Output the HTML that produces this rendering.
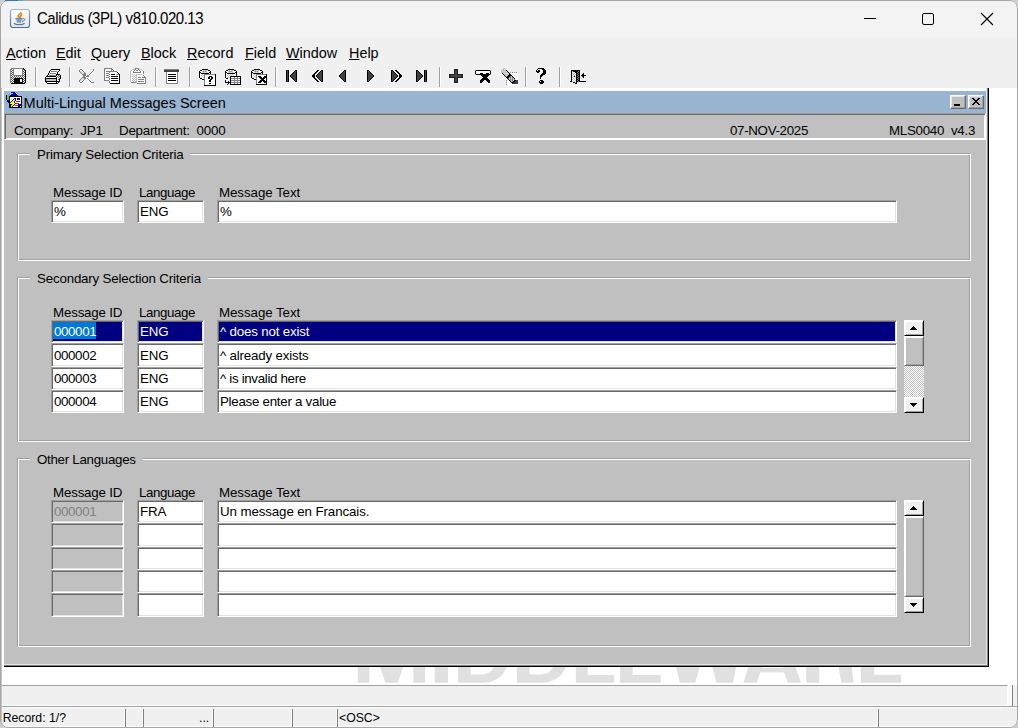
<!DOCTYPE html>
<html>
<head>
<meta charset="utf-8">
<title>Calidus (3PL) v810.020.13</title>
<style>
html,body{margin:0;padding:0;}
body{width:1018px;height:728px;overflow:hidden;position:relative;background:#f0f0f0;font-family:"Liberation Sans",sans-serif;font-size:13px;color:#000;}
div,svg{position:absolute;}
#win{left:0;top:0;width:1018px;height:728px;background:#f0f0f0;overflow:hidden;}
#titlebar{left:0;top:0;width:1018px;height:38px;background:#f3f3f3;}
#title{left:37px;top:10.400px;font-size:15px;letter-spacing:-0.46px;line-height:18px;transform:scaleY(1.05);transform-origin:0 14.200px;white-space:nowrap;color:#000;}
#menubar{left:0;top:38px;width:1018px;height:27px;background:#f0f0f0;}
.mi{top:6px;font-size:14.4px;line-height:18px;white-space:nowrap;}
.mi u{text-decoration:underline;text-underline-offset:1px;}
#toolbar{left:0;top:65px;width:1018px;height:23px;background:#f0f0f0;}
.sep{top:2px;width:1px;height:20px;background:#a0a0a0;border-right:1px solid #fff;}
.ic{overflow:visible;}
#mdi{left:2px;top:88px;width:1015px;height:597px;background:#fff;overflow:hidden;}
/* child window (coords relative to page via #cw offset) */
#child{left:2px;top:0px;width:984px;height:578px;background:#c0c0c0;border-right:1px solid #000;border-bottom:1px solid #000;}
#chl{left:982px;top:0;width:1px;height:578px;background:#e4e4e4;}
#chd{left:983px;top:0;width:1px;height:578px;background:#808080;}
#cbl{left:0;top:576px;width:983px;height:1px;background:#e4e4e4;}
#cbd{left:0;top:577px;width:984px;height:1px;background:#808080;}
#ctitle{left:0;top:0px;width:982px;height:22px;background:#99b4d1;border-top:3px solid #fff;}
#ctext{left:19.600px;top:3px;font-size:14.5px;line-height:18px;white-space:nowrap;}
.cbtn{top:3px;width:16px;height:14px;background:#c0c0c0;box-sizing:border-box;border:1px solid;border-color:#fff #404040 #404040 #fff;}
#info{left:0px;top:25px;width:982px;height:27px;box-sizing:border-box;border:1px solid;border-color:#a0a0a0 #fff #fff #a0a0a0;box-shadow:inset 1px 1px 0 #696969,inset -1px -1px 0 #fff;background:#c0c0c0;}
.lbl{font-size:13.33px;line-height:15px;white-space:nowrap;}
/* page-absolute layer inside child: origin at page (4,89) */
#form{left:-4px;top:-88px;width:0;height:0;}
.grp{box-sizing:border-box;border:1px solid #a0a0a0;}
.grp i{position:absolute;left:0;top:0;right:-2px;bottom:-2px;border:1px solid #fff;}
.gt{background:#c0c0c0;font-size:13.33px;line-height:15px;white-space:nowrap;padding:0 7px;}
.fld{box-sizing:border-box;height:23px;background:#fff;border:1px solid;border-color:#a0a0a0 #fff #fff #a0a0a0;box-shadow:inset 1px 1px 0 #696969,inset -1px -1px 0 #e3e3e3;font-size:13.33px;line-height:19px;padding:1px 0 0 2px;white-space:nowrap;overflow:hidden;}
.fld b{position:absolute;left:1px;top:1px;height:17px;background:#0078d7;font-weight:normal;}
.fld span{position:relative;}
.fld.sel{background:#000080;color:#fff;}
.fld.dis{background:#c0c0c0;color:#808080;}
#msgline{left:2px;top:685px;width:1006px;height:21px;background:#f0f0f0;border-top:1px solid #a0a0a0;border-bottom:1px solid #fff;border-right:1px solid #fff;box-sizing:border-box;}
#status{left:2px;top:706px;width:1015px;height:21px;background:#f0f0f0;border-top:1px solid #a0a0a0;border-bottom:1px solid #fff;box-shadow:inset 0 1px 0 #fff;box-sizing:border-box;font-size:12px;}
.sd{top:2px;width:1px;height:18px;margin-left:-2px;background:#808080;border-left:1px solid #fff;}
.st{top:4px;margin-left:-2px;line-height:15px;font-size:12.25px;white-space:nowrap;}
.sb{width:20px;background:#c0c0c0;}
.sbb{left:0;width:20px;height:16px;box-sizing:border-box;background:#f0f0f0;border:1px solid;border-color:#fff #000 #000 #fff;box-shadow:inset 1px 1px 0 #fff,inset -1px -1px 0 #a0a0a0;}
.sbt{left:0;width:20px;box-sizing:border-box;background:#c0c0c0;border:1px solid;border-color:#fff #696969 #696969 #fff;box-shadow:inset 1px 1px 0 #fff,inset -1px -1px 0 #a0a0a0;}
.sbk{left:0;width:20px;background:repeating-conic-gradient(#fff 0% 25%,#c0c0c0 0% 50%) 0 0/2px 2px;}
.cb{top:95px;width:16px;height:14px;box-sizing:border-box;background:#c0c0c0;border:1px solid;border-color:#fff #696969 #696969 #fff;box-shadow:inset -1px -1px 0 #a0a0a0,inset 1px 1px 0 #e3e3e3;}
#frame{left:0;top:0;width:1018px;height:728px;box-sizing:border-box;border:1px solid #a6a6a6;border-radius:8px;box-shadow:0 0 0 12px #cfcfcf;pointer-events:none;}
#lb{left:1px;top:88px;width:1px;height:639px;background:#c4c4c4;}
#vr1{left:1008px;top:685px;width:4px;height:21px;background:#fafafa;}
#vr2{left:1012px;top:685px;width:1px;height:22px;background:#808080;}
</style>
</head>
<body>
<div id="win">
  <div id="titlebar">
    <div id="title">Calidus (3PL) v810.020.13</div>
    <svg style="left:9px;top:8px" width="22" height="21" viewBox="0 0 22 21">
      <defs><linearGradient id="jb" x1="0" y1="0" x2="0" y2="1"><stop offset="0" stop-color="#9db6d0"/><stop offset="1" stop-color="#4d6c8c"/></linearGradient>
      <linearGradient id="jf" x1="0" y1="0" x2="0" y2="1"><stop offset="0" stop-color="#ffffff"/><stop offset="1" stop-color="#e6e6e6"/></linearGradient></defs>
      <rect x="1.5" y="1.5" width="19" height="18" rx="2.5" fill="url(#jf)" stroke="url(#jb)" stroke-width="1.2"/>
      <path d="M11.700 4C13.200 5.400 14 6.500 12.800 7.800C12 8.700 12.300 9.800 12.800 10.800C10.400 10.900 8.300 9.700 8.300 8C8.300 6.400 10.600 5.700 11.700 4Z" fill="#e8892b"/>
      <circle cx="11.300" cy="6.600" r=".45" fill="#fff"/><circle cx="10.400" cy="7.600" r=".4" fill="#fff"/>
      <path d="M6.300 10.700H13.600" stroke="#557aa0" stroke-width="1.200" fill="none"/>
      <path d="M7.100 11.300H12.900L11.900 14.700H8.100Z" fill="#7d9bb9"/>
      <path d="M13.400 10.900C15.800 10 16.600 11.600 15 12.700L12.900 13.600" fill="none" stroke="#557aa0" stroke-width="1"/>
      <path d="M4.900 15.200C7 17.200 13.500 17.200 15.600 15.200" fill="none" stroke="#557aa0" stroke-width="1.200"/>
    </svg>
    <svg style="left:860px;top:8px" width="140" height="22" viewBox="0 0 140 22" fill="none" stroke="#000" stroke-width="1">
      <path d="M4 10.500h12"/>
      <rect x="62.500" y="5.500" width="11" height="11" rx="1.500"/>
      <path d="M121 5l12 12M133 5l-12 12" stroke-width="1.100"/>
    </svg>
  </div>
  <div id="menubar">
    <div class="mi" style="left:6px"><u>A</u>ction</div>
    <div class="mi" style="left:56px"><u>E</u>dit</div>
    <div class="mi" style="left:91px"><u>Q</u>uery</div>
    <div class="mi" style="left:141px"><u>B</u>lock</div>
    <div class="mi" style="left:187px"><u>R</u>ecord</div>
    <div class="mi" style="left:245px"><u>F</u>ield</div>
    <div class="mi" style="left:286px"><u>W</u>indow</div>
    <div class="mi" style="left:349px"><u>H</u>elp</div>
  </div>
  <div id="toolbar">
<svg class="ic" style="left:10px;top:3px" width="16" height="16" viewBox="0 0 16 16" shape-rendering="crispEdges"><path fill="#808080" d="M1 0h12v1h-12zM0 1h1v1h-1zM3 1h1v1h-1zM12 1h1v1h-1zM0 2h1v1h-1zM3 2h1v1h-1zM12 2h1v1h-1zM0 3h1v1h-1zM3 3h1v1h-1zM12 3h1v1h-1zM0 4h1v1h-1zM3 4h1v1h-1zM12 4h1v1h-1zM0 5h1v1h-1zM3 5h1v1h-1zM12 5h1v1h-1zM0 6h1v1h-1zM3 6h1v1h-1zM12 6h1v1h-1zM0 7h1v1h-1zM3 7h10v1h-10zM0 8h1v1h-1zM0 9h1v1h-1zM0 10h1v1h-1zM0 11h1v1h-1zM0 12h1v1h-1zM0 13h1v1h-1zM0 14h1v1h-1z"/><path fill="#000" d="M13 0h1v1h-1zM14 1h1v1h-1zM15 2h1v1h-1zM15 3h1v1h-1zM15 4h1v1h-1zM15 5h1v1h-1zM15 6h1v1h-1zM15 7h1v1h-1zM15 8h1v1h-1zM15 9h1v1h-1zM4 10h9v1h-9zM15 10h1v1h-1zM4 11h6v1h-6zM12 11h1v1h-1zM15 11h1v1h-1zM4 12h6v1h-6zM12 12h1v1h-1zM15 12h1v1h-1zM4 13h6v1h-6zM12 13h1v1h-1zM15 13h1v1h-1zM4 14h9v1h-9zM15 14h1v1h-1zM1 15h14v1h-14z"/><path fill="#505050" d="M1 1h1v1h-1zM13 1h1v1h-1zM2 2h1v1h-1zM14 2h1v1h-1zM1 3h1v1h-1zM13 3h1v1h-1zM2 4h1v1h-1zM14 4h1v1h-1zM1 5h1v1h-1zM13 5h1v1h-1zM2 6h1v1h-1zM14 6h1v1h-1zM1 7h1v1h-1zM13 7h1v1h-1zM2 8h1v1h-1zM4 8h1v1h-1zM6 8h1v1h-1zM8 8h1v1h-1zM10 8h1v1h-1zM12 8h1v1h-1zM14 8h1v1h-1zM1 9h1v1h-1zM3 9h1v1h-1zM5 9h1v1h-1zM7 9h1v1h-1zM9 9h1v1h-1zM11 9h1v1h-1zM13 9h1v1h-1zM2 10h1v1h-1zM14 10h1v1h-1zM1 11h1v1h-1zM3 11h1v1h-1zM13 11h1v1h-1zM2 12h1v1h-1zM14 12h1v1h-1zM1 13h1v1h-1zM3 13h1v1h-1zM13 13h1v1h-1zM2 14h1v1h-1zM14 14h1v1h-1z"/><path fill="#fff" d="M2 1h1v1h-1zM4 1h8v1h-8zM1 2h1v1h-1zM4 2h8v1h-8zM13 2h1v1h-1zM2 3h1v1h-1zM4 3h8v1h-8zM14 3h1v1h-1zM1 4h1v1h-1zM4 4h8v1h-8zM13 4h1v1h-1zM2 5h1v1h-1zM4 5h8v1h-8zM14 5h1v1h-1zM1 6h1v1h-1zM4 6h8v1h-8zM13 6h1v1h-1zM2 7h1v1h-1zM14 7h1v1h-1zM1 8h1v1h-1zM3 8h1v1h-1zM5 8h1v1h-1zM7 8h1v1h-1zM9 8h1v1h-1zM11 8h1v1h-1zM13 8h1v1h-1zM2 9h1v1h-1zM4 9h1v1h-1zM6 9h1v1h-1zM8 9h1v1h-1zM10 9h1v1h-1zM12 9h1v1h-1zM14 9h1v1h-1zM1 10h1v1h-1zM3 10h1v1h-1zM13 10h1v1h-1zM2 11h1v1h-1zM10 11h2v1h-2zM14 11h1v1h-1zM1 12h1v1h-1zM3 12h1v1h-1zM10 12h2v1h-2zM13 12h1v1h-1zM2 13h1v1h-1zM10 13h2v1h-2zM14 13h1v1h-1zM1 14h1v1h-1zM3 14h1v1h-1zM13 14h1v1h-1z"/></svg>
<svg class="ic" style="left:45px;top:3px" width="16" height="16" viewBox="0 0 16 16" shape-rendering="crispEdges"><path fill="#000" d="M6 1h9v1h-9zM5 2h1v1h-1zM14 2h1v1h-1zM4 3h1v1h-1zM13 3h1v1h-1zM4 4h1v1h-1zM12 4h1v1h-1zM3 5h1v1h-1zM12 5h1v1h-1zM3 6h1v1h-1zM11 6h4v1h-4zM2 7h1v1h-1zM11 7h1v1h-1zM15 7h1v1h-1zM1 8h10v1h-10zM15 8h1v1h-1zM0 9h1v1h-1zM11 9h1v1h-1zM15 9h1v1h-1zM0 10h12v1h-12zM15 10h1v1h-1zM0 11h1v1h-1zM11 11h1v1h-1zM14 11h1v1h-1zM0 12h1v1h-1zM11 12h1v1h-1zM14 12h1v1h-1zM0 13h13v1h-13zM14 13h1v1h-1zM1 14h1v1h-1zM11 14h1v1h-1zM13 14h1v1h-1zM2 15h11v1h-11z"/><path fill="#fff" d="M6 2h8v1h-8zM5 3h1v1h-1zM12 3h1v1h-1zM5 4h7v1h-7zM4 5h1v1h-1zM11 5h1v1h-1zM4 6h7v1h-7zM3 7h1v1h-1zM12 7h1v1h-1zM14 7h1v1h-1zM11 8h1v1h-1zM13 8h1v1h-1zM1 9h10v1h-10zM12 9h1v1h-1zM14 9h1v1h-1zM12 10h2v1h-2zM12 11h1v1h-1zM12 12h2v1h-2zM2 14h9v1h-9zM12 14h1v1h-1z"/><path fill="#808080" d="M6 3h6v1h-6zM5 5h6v1h-6zM4 7h7v1h-7z"/><path fill="#505050" d="M13 7h1v1h-1zM12 8h1v1h-1zM14 8h1v1h-1zM13 9h1v1h-1zM14 10h1v1h-1zM13 11h1v1h-1zM13 13h1v1h-1z"/><path fill="#c0c0c0" d="M1 11h10v1h-10zM1 12h10v1h-10z"/></svg>
<svg class="ic" style="left:79px;top:3px" width="16" height="16" viewBox="0 0 16 16" shape-rendering="crispEdges"><path fill="#808080" d="M1 1h2v1h-2zM14 1h1v1h-1zM0 2h1v1h-1zM3 2h1v1h-1zM14 2h1v1h-1zM0 3h1v1h-1zM4 3h1v1h-1zM13 3h1v1h-1zM1 4h1v1h-1zM5 4h1v1h-1zM12 4h1v1h-1zM2 5h1v1h-1zM5 5h2v1h-2zM11 5h1v1h-1zM3 6h4v1h-4zM10 6h1v1h-1zM4 7h3v1h-3zM8 7h2v1h-2zM4 8h2v1h-2zM7 8h3v1h-3zM3 9h4v1h-4zM2 10h1v1h-1zM5 10h2v1h-2zM8 10h1v1h-1zM1 11h1v1h-1zM5 11h1v1h-1zM9 11h1v1h-1zM0 12h1v1h-1zM4 12h1v1h-1zM10 12h1v1h-1zM0 13h1v1h-1zM3 13h1v1h-1zM11 13h1v1h-1zM1 14h2v1h-2zM12 14h3v1h-3z"/><path fill="#e0e0e0" d="M12 1h2v1h-2zM1 2h2v1h-2zM11 2h1v1h-1zM1 3h3v1h-3zM10 3h1v1h-1zM2 4h3v1h-3zM9 4h1v1h-1zM3 5h2v1h-2zM8 5h1v1h-1zM7 6h1v1h-1zM9 9h1v1h-1zM3 10h2v1h-2zM11 10h1v1h-1zM2 11h3v1h-3zM12 11h1v1h-1zM1 12h3v1h-3zM13 12h1v1h-1zM1 13h2v1h-2zM14 13h1v1h-1z"/><path fill="#fff" d="M12 2h2v1h-2zM11 3h2v1h-2zM10 4h2v1h-2zM9 5h2v1h-2zM8 6h2v1h-2zM7 7h1v1h-1zM6 8h1v1h-1zM7 9h2v1h-2zM9 10h2v1h-2zM10 11h2v1h-2zM11 12h2v1h-2zM12 13h2v1h-2z"/></svg>
<svg class="ic" style="left:104px;top:3px" width="16" height="16" viewBox="0 0 16 16" shape-rendering="crispEdges"><path fill="#808080" d="M0 0h8v1h-8zM0 1h1v1h-1zM7 1h2v1h-2zM0 2h1v1h-1zM7 2h1v1h-1zM9 2h1v1h-1zM0 3h1v1h-1zM2 3h11v1h-11zM0 4h1v1h-1zM5 4h1v1h-1zM0 5h1v1h-1zM2 5h3v1h-3zM0 6h1v1h-1zM5 6h1v1h-1zM12 6h3v1h-3zM0 7h1v1h-1zM2 7h3v1h-3zM0 8h1v1h-1zM5 8h1v1h-1zM0 9h1v1h-1zM2 9h3v1h-3zM0 10h1v1h-1zM5 10h1v1h-1zM0 11h1v1h-1zM5 11h1v1h-1zM0 12h5v1h-5zM5 13h1v1h-1zM5 14h1v1h-1z"/><path fill="#fff" d="M1 1h6v1h-6zM1 2h6v1h-6zM8 2h1v1h-1zM1 3h1v1h-1zM1 4h4v1h-4zM6 4h7v1h-7zM1 5h1v1h-1zM5 5h9v1h-9zM1 6h4v1h-4zM6 6h1v1h-1zM11 6h1v1h-1zM1 7h1v1h-1zM5 7h10v1h-10zM1 8h4v1h-4zM6 8h1v1h-1zM14 8h1v1h-1zM1 9h1v1h-1zM5 9h10v1h-10zM1 10h4v1h-4zM6 10h1v1h-1zM14 10h1v1h-1zM1 11h4v1h-4zM6 11h9v1h-9zM5 12h2v1h-2zM14 12h1v1h-1zM6 13h9v1h-9zM6 14h9v1h-9z"/><path fill="#000" d="M13 4h1v1h-1zM14 5h1v1h-1zM7 6h4v1h-4zM15 6h1v1h-1zM15 7h1v1h-1zM7 8h7v1h-7zM15 8h1v1h-1zM15 9h1v1h-1zM7 10h7v1h-7zM15 10h1v1h-1zM15 11h1v1h-1zM7 12h7v1h-7zM15 12h1v1h-1zM15 13h1v1h-1zM15 14h1v1h-1zM6 15h10v1h-10z"/></svg>
<svg class="ic" style="left:130px;top:3px" width="16" height="16" viewBox="0 0 16 16" shape-rendering="crispEdges"><path fill="#808080" d="M5 0h4v1h-4zM5 1h1v1h-1zM8 1h1v1h-1zM4 2h1v1h-1zM6 2h2v1h-2zM9 2h1v1h-1zM3 3h1v1h-1zM10 3h1v1h-1zM13 3h1v1h-1zM3 4h8v1h-8zM13 4h1v1h-1zM13 5h1v1h-1zM13 7h1v1h-1zM14 8h1v1h-1zM8 9h3v1h-3zM12 9h4v1h-4zM15 10h1v1h-1zM8 11h6v1h-6zM15 11h1v1h-1zM15 12h1v1h-1zM8 13h6v1h-6zM15 13h1v1h-1zM1 14h5v1h-5zM15 14h1v1h-1zM7 15h9v1h-9z"/><path fill="#c0c0c0" d="M2 1h3v1h-3zM9 1h3v1h-3zM1 2h1v1h-1zM12 2h1v1h-1zM0 3h1v1h-1zM0 4h1v1h-1zM0 5h1v1h-1zM0 6h1v1h-1zM2 6h1v1h-1zM4 6h1v1h-1zM6 6h6v1h-6zM0 7h1v1h-1zM3 7h1v1h-1zM5 7h2v1h-2zM0 8h1v1h-1zM2 8h1v1h-1zM4 8h1v1h-1zM6 8h1v1h-1zM0 9h1v1h-1zM3 9h1v1h-1zM5 9h2v1h-2zM0 10h1v1h-1zM2 10h1v1h-1zM4 10h1v1h-1zM6 10h1v1h-1zM0 11h1v1h-1zM3 11h1v1h-1zM5 11h2v1h-2zM0 12h1v1h-1zM2 12h1v1h-1zM4 12h1v1h-1zM6 12h1v1h-1zM0 13h1v1h-1zM3 13h1v1h-1zM5 13h2v1h-2zM6 14h1v1h-1z"/><path fill="#fff" d="M6 1h2v1h-2zM2 2h2v1h-2zM5 2h1v1h-1zM8 2h1v1h-1zM10 2h2v1h-2zM1 3h2v1h-2zM4 3h6v1h-6zM11 3h2v1h-2zM1 4h2v1h-2zM11 4h2v1h-2zM1 5h12v1h-12zM1 6h1v1h-1zM3 6h1v1h-1zM5 6h1v1h-1zM1 7h2v1h-2zM4 7h1v1h-1zM7 7h6v1h-6zM1 8h1v1h-1zM3 8h1v1h-1zM5 8h1v1h-1zM7 8h7v1h-7zM1 9h2v1h-2zM4 9h1v1h-1zM7 9h1v1h-1zM11 9h1v1h-1zM1 10h1v1h-1zM3 10h1v1h-1zM5 10h1v1h-1zM7 10h8v1h-8zM1 11h2v1h-2zM4 11h1v1h-1zM7 11h1v1h-1zM14 11h1v1h-1zM1 12h1v1h-1zM3 12h1v1h-1zM5 12h1v1h-1zM7 12h8v1h-8zM1 13h2v1h-2zM4 13h1v1h-1zM7 13h1v1h-1zM14 13h1v1h-1zM7 14h8v1h-8z"/></svg>
<svg class="ic" style="left:164px;top:4px" width="15" height="15" viewBox="0 0 15 15" shape-rendering="crispEdges"><path fill="#808080" d="M0 0h15v1h-15zM2 3h1v1h-1zM13 3h1v1h-1zM2 4h1v1h-1zM13 4h1v1h-1zM2 5h1v1h-1zM13 5h1v1h-1zM2 6h1v1h-1zM13 6h1v1h-1zM2 7h1v1h-1zM13 7h1v1h-1zM2 8h1v1h-1zM13 8h1v1h-1zM2 9h1v1h-1zM13 9h1v1h-1zM2 10h1v1h-1zM13 10h1v1h-1zM2 11h1v1h-1zM13 11h1v1h-1zM2 12h1v1h-1zM13 12h1v1h-1zM2 13h1v1h-1zM13 13h1v1h-1zM2 14h12v1h-12z"/><path fill="#404040" d="M0 1h15v1h-15zM0 2h15v1h-15z"/><path fill="#fff" d="M3 3h10v1h-10zM3 4h10v1h-10zM3 5h1v1h-1zM12 5h1v1h-1zM3 6h10v1h-10zM3 7h1v1h-1zM12 7h1v1h-1zM3 8h10v1h-10zM3 9h1v1h-1zM12 9h1v1h-1zM3 10h10v1h-10zM3 11h1v1h-1zM12 11h1v1h-1zM3 12h10v1h-10zM3 13h10v1h-10z"/><path fill="#000" d="M4 5h8v1h-8zM4 7h8v1h-8zM4 9h8v1h-8zM4 11h8v1h-8z"/></svg>
<svg class="ic" style="left:199px;top:4px" width="17" height="17" viewBox="0 0 17 17" shape-rendering="crispEdges"><path fill="#000" d="M3 0h6v1h-6zM1 1h2v1h-2zM9 1h2v1h-2zM0 2h1v1h-1zM11 2h1v1h-1zM0 3h2v1h-2zM10 3h2v1h-2zM0 4h1v1h-1zM2 4h8v1h-8zM11 4h1v1h-1zM0 5h1v1h-1zM16 5h1v1h-1zM0 6h1v1h-1zM16 6h1v1h-1zM0 7h1v1h-1zM10 7h3v1h-3zM16 7h1v1h-1zM0 8h1v1h-1zM9 8h2v1h-2zM12 8h2v1h-2zM16 8h1v1h-1zM1 9h2v1h-2zM9 9h2v1h-2zM12 9h2v1h-2zM16 9h1v1h-1zM3 10h2v1h-2zM11 10h2v1h-2zM16 10h1v1h-1zM10 11h2v1h-2zM16 11h1v1h-1zM10 12h2v1h-2zM16 12h1v1h-1zM16 13h1v1h-1zM10 14h2v1h-2zM16 14h1v1h-1zM16 15h1v1h-1zM5 16h12v1h-12z"/><path fill="#e0e0e0" d="M3 1h1v1h-1zM5 1h2v1h-2zM8 1h1v1h-1zM3 3h1v1h-1zM5 3h2v1h-2zM8 3h1v1h-1z"/><path fill="#c0c0c0" d="M4 1h1v1h-1zM7 1h1v1h-1zM3 2h1v1h-1zM5 2h1v1h-1zM7 2h1v1h-1zM4 3h1v1h-1zM7 3h1v1h-1zM3 5h1v1h-1zM2 6h1v1h-1zM4 6h1v1h-1zM3 7h1v1h-1zM2 8h1v1h-1zM4 8h1v1h-1z"/><path fill="#fff" d="M1 2h2v1h-2zM8 2h3v1h-3zM2 3h1v1h-1zM9 3h1v1h-1zM1 4h1v1h-1zM10 4h1v1h-1zM1 5h2v1h-2zM4 5h1v1h-1zM1 6h1v1h-1zM3 6h1v1h-1zM6 6h10v1h-10zM1 7h2v1h-2zM4 7h1v1h-1zM6 7h4v1h-4zM13 7h3v1h-3zM1 8h1v1h-1zM3 8h1v1h-1zM6 8h3v1h-3zM11 8h1v1h-1zM14 8h2v1h-2zM3 9h2v1h-2zM6 9h3v1h-3zM11 9h1v1h-1zM14 9h2v1h-2zM6 10h5v1h-5zM13 10h3v1h-3zM6 11h4v1h-4zM12 11h4v1h-4zM6 12h4v1h-4zM12 12h4v1h-4zM6 13h10v1h-10zM6 14h4v1h-4zM12 14h4v1h-4zM6 15h10v1h-10z"/><path fill="#808080" d="M4 2h1v1h-1zM6 2h1v1h-1zM5 5h11v1h-11zM5 6h1v1h-1zM5 7h1v1h-1zM5 8h1v1h-1zM5 9h1v1h-1zM5 10h1v1h-1zM5 11h1v1h-1zM5 12h1v1h-1zM5 13h1v1h-1zM5 14h1v1h-1zM5 15h1v1h-1z"/></svg>
<svg class="ic" style="left:225px;top:4px" width="16" height="16" viewBox="0 0 16 16" shape-rendering="crispEdges"><path fill="#000" d="M3 0h6v1h-6zM1 1h2v1h-2zM9 1h2v1h-2zM0 2h1v1h-1zM11 2h1v1h-1zM0 3h2v1h-2zM10 3h2v1h-2zM0 4h1v1h-1zM2 4h8v1h-8zM11 4h1v1h-1zM0 5h1v1h-1zM11 5h1v1h-1zM0 6h1v1h-1zM11 6h1v1h-1zM0 7h1v1h-1zM5 7h11v1h-11zM0 8h1v1h-1zM5 8h1v1h-1zM15 8h1v1h-1zM1 9h2v1h-2zM5 9h1v1h-1zM15 9h1v1h-1zM5 10h1v1h-1zM15 10h1v1h-1zM0 11h1v1h-1zM5 11h1v1h-1zM15 11h1v1h-1zM0 12h1v1h-1zM3 12h1v1h-1zM5 12h1v1h-1zM15 12h1v1h-1zM0 13h6v1h-6zM15 13h1v1h-1zM3 14h1v1h-1zM5 14h1v1h-1zM15 14h1v1h-1zM2 15h1v1h-1zM5 15h11v1h-11z"/><path fill="#e0e0e0" d="M3 1h1v1h-1zM5 1h2v1h-2zM8 1h1v1h-1zM3 3h1v1h-1zM5 3h2v1h-2zM8 3h1v1h-1z"/><path fill="#c0c0c0" d="M4 1h1v1h-1zM7 1h1v1h-1zM3 2h1v1h-1zM5 2h1v1h-1zM7 2h1v1h-1zM4 3h1v1h-1zM7 3h1v1h-1zM3 5h1v1h-1zM5 5h1v1h-1zM7 5h1v1h-1zM2 6h1v1h-1zM4 6h1v1h-1zM6 6h1v1h-1zM8 6h1v1h-1zM3 7h1v1h-1zM2 8h1v1h-1zM4 8h1v1h-1z"/><path fill="#fff" d="M1 2h2v1h-2zM8 2h3v1h-3zM2 3h1v1h-1zM9 3h1v1h-1zM1 4h1v1h-1zM10 4h1v1h-1zM1 5h2v1h-2zM4 5h1v1h-1zM6 5h1v1h-1zM8 5h3v1h-3zM1 6h1v1h-1zM3 6h1v1h-1zM5 6h1v1h-1zM7 6h1v1h-1zM9 6h2v1h-2zM1 7h2v1h-2zM4 7h1v1h-1zM1 8h1v1h-1zM3 8h1v1h-1zM6 8h3v1h-3zM10 8h2v1h-2zM13 8h2v1h-2zM3 9h2v1h-2zM6 10h3v1h-3zM10 10h2v1h-2zM13 10h2v1h-2zM6 12h3v1h-3zM10 12h2v1h-2zM13 12h2v1h-2zM6 14h3v1h-3zM10 14h2v1h-2zM13 14h2v1h-2z"/><path fill="#808080" d="M4 2h1v1h-1zM6 2h1v1h-1zM9 8h1v1h-1zM12 8h1v1h-1zM6 9h9v1h-9zM9 10h1v1h-1zM12 10h1v1h-1zM6 11h9v1h-9zM9 12h1v1h-1zM12 12h1v1h-1zM6 13h9v1h-9zM9 14h1v1h-1zM12 14h1v1h-1z"/></svg>
<svg class="ic" style="left:251px;top:4px" width="17" height="16" viewBox="0 0 17 16" shape-rendering="crispEdges"><path fill="#000" d="M3 0h6v1h-6zM1 1h2v1h-2zM9 1h2v1h-2zM0 2h1v1h-1zM11 2h1v1h-1zM0 3h2v1h-2zM10 3h2v1h-2zM0 4h1v1h-1zM2 4h8v1h-8zM11 4h1v1h-1zM0 5h1v1h-1zM15 5h1v1h-1zM0 6h1v1h-1zM15 6h1v1h-1zM0 7h1v1h-1zM7 7h3v1h-3zM13 7h3v1h-3zM0 8h1v1h-1zM8 8h3v1h-3zM12 8h4v1h-4zM1 9h2v1h-2zM9 9h5v1h-5zM15 9h1v1h-1zM3 10h2v1h-2zM10 10h3v1h-3zM15 10h1v1h-1zM9 11h5v1h-5zM15 11h1v1h-1zM8 12h3v1h-3zM12 12h4v1h-4zM7 13h3v1h-3zM13 13h3v1h-3zM15 14h1v1h-1zM5 15h11v1h-11z"/><path fill="#e0e0e0" d="M3 1h1v1h-1zM5 1h2v1h-2zM8 1h1v1h-1zM3 3h1v1h-1zM5 3h2v1h-2zM8 3h1v1h-1z"/><path fill="#c0c0c0" d="M4 1h1v1h-1zM7 1h1v1h-1zM3 2h1v1h-1zM5 2h1v1h-1zM7 2h1v1h-1zM4 3h1v1h-1zM7 3h1v1h-1zM3 5h1v1h-1zM2 6h1v1h-1zM4 6h1v1h-1zM3 7h1v1h-1zM2 8h1v1h-1zM4 8h1v1h-1z"/><path fill="#fff" d="M1 2h2v1h-2zM8 2h3v1h-3zM2 3h1v1h-1zM9 3h1v1h-1zM1 4h1v1h-1zM10 4h1v1h-1zM1 5h2v1h-2zM4 5h1v1h-1zM1 6h1v1h-1zM3 6h1v1h-1zM6 6h9v1h-9zM1 7h2v1h-2zM4 7h1v1h-1zM6 7h1v1h-1zM10 7h3v1h-3zM1 8h1v1h-1zM3 8h1v1h-1zM6 8h2v1h-2zM11 8h1v1h-1zM3 9h2v1h-2zM6 9h3v1h-3zM14 9h1v1h-1zM6 10h4v1h-4zM13 10h2v1h-2zM6 11h3v1h-3zM14 11h1v1h-1zM6 12h2v1h-2zM11 12h1v1h-1zM6 13h1v1h-1zM10 13h3v1h-3zM6 14h9v1h-9z"/><path fill="#808080" d="M4 2h1v1h-1zM6 2h1v1h-1zM5 5h10v1h-10zM5 6h1v1h-1zM5 7h1v1h-1zM5 8h1v1h-1zM5 9h1v1h-1zM5 10h1v1h-1zM5 11h1v1h-1zM5 12h1v1h-1zM5 13h1v1h-1zM5 14h1v1h-1z"/></svg>
<svg class="ic" style="left:286px;top:5px" width="11" height="12" viewBox="0 0 11 12" shape-rendering="crispEdges"><path fill="#000" d="M0 0h1v1h-1zM2 0h1v1h-1zM9 0h2v1h-2zM0 1h1v1h-1zM2 1h1v1h-1zM8 1h1v1h-1zM10 1h1v1h-1zM0 2h1v1h-1zM2 2h1v1h-1zM7 2h1v1h-1zM10 2h1v1h-1zM0 3h1v1h-1zM2 3h1v1h-1zM6 3h1v1h-1zM10 3h1v1h-1zM0 4h1v1h-1zM2 4h1v1h-1zM5 4h1v1h-1zM10 4h1v1h-1zM0 5h1v1h-1zM2 5h1v1h-1zM4 5h1v1h-1zM10 5h1v1h-1zM0 6h1v1h-1zM2 6h1v1h-1zM4 6h1v1h-1zM10 6h1v1h-1zM0 7h1v1h-1zM2 7h1v1h-1zM5 7h1v1h-1zM10 7h1v1h-1zM0 8h1v1h-1zM2 8h1v1h-1zM6 8h1v1h-1zM10 8h1v1h-1zM0 9h1v1h-1zM2 9h1v1h-1zM7 9h1v1h-1zM10 9h1v1h-1zM0 10h1v1h-1zM2 10h1v1h-1zM8 10h1v1h-1zM10 10h1v1h-1zM0 11h1v1h-1zM2 11h1v1h-1zM9 11h2v1h-2z"/><path fill="#404040" d="M1 0h1v1h-1zM1 1h1v1h-1zM9 1h1v1h-1zM1 2h1v1h-1zM8 2h2v1h-2zM1 3h1v1h-1zM7 3h3v1h-3zM1 4h1v1h-1zM6 4h4v1h-4zM1 5h1v1h-1zM5 5h5v1h-5zM1 6h1v1h-1zM5 6h5v1h-5zM1 7h1v1h-1zM6 7h4v1h-4zM1 8h1v1h-1zM7 8h3v1h-3zM1 9h1v1h-1zM8 9h2v1h-2zM1 10h1v1h-1zM9 10h1v1h-1zM1 11h1v1h-1z"/></svg>
<svg class="ic" style="left:312px;top:5px" width="11" height="12" viewBox="0 0 11 12" shape-rendering="crispEdges"><path fill="#000" d="M5 0h2v1h-2zM9 0h2v1h-2zM4 1h2v1h-2zM8 1h1v1h-1zM10 1h1v1h-1zM3 2h2v1h-2zM7 2h1v1h-1zM10 2h1v1h-1zM2 3h2v1h-2zM6 3h1v1h-1zM10 3h1v1h-1zM1 4h2v1h-2zM5 4h1v1h-1zM10 4h1v1h-1zM0 5h3v1h-3zM4 5h1v1h-1zM10 5h1v1h-1zM0 6h3v1h-3zM4 6h1v1h-1zM10 6h1v1h-1zM1 7h2v1h-2zM5 7h1v1h-1zM10 7h1v1h-1zM2 8h2v1h-2zM6 8h1v1h-1zM10 8h1v1h-1zM3 9h2v1h-2zM7 9h1v1h-1zM10 9h1v1h-1zM4 10h2v1h-2zM8 10h1v1h-1zM10 10h1v1h-1zM5 11h2v1h-2zM9 11h2v1h-2z"/><path fill="#404040" d="M9 1h1v1h-1zM8 2h2v1h-2zM7 3h3v1h-3zM6 4h4v1h-4zM5 5h5v1h-5zM5 6h5v1h-5zM6 7h4v1h-4zM7 8h3v1h-3zM8 9h2v1h-2zM9 10h1v1h-1z"/></svg>
<svg class="ic" style="left:339px;top:5px" width="7" height="12" viewBox="0 0 7 12" shape-rendering="crispEdges"><path fill="#000" d="M5 0h2v1h-2zM4 1h1v1h-1zM6 1h1v1h-1zM3 2h1v1h-1zM6 2h1v1h-1zM2 3h1v1h-1zM6 3h1v1h-1zM1 4h1v1h-1zM6 4h1v1h-1zM0 5h1v1h-1zM6 5h1v1h-1zM0 6h1v1h-1zM6 6h1v1h-1zM1 7h1v1h-1zM6 7h1v1h-1zM2 8h1v1h-1zM6 8h1v1h-1zM3 9h1v1h-1zM6 9h1v1h-1zM4 10h1v1h-1zM6 10h1v1h-1zM5 11h2v1h-2z"/><path fill="#404040" d="M5 1h1v1h-1zM4 2h2v1h-2zM3 3h3v1h-3zM2 4h4v1h-4zM1 5h5v1h-5zM1 6h5v1h-5zM2 7h4v1h-4zM3 8h3v1h-3zM4 9h2v1h-2zM5 10h1v1h-1z"/></svg>
<svg class="ic" style="left:367px;top:5px" width="7" height="12" viewBox="0 0 7 12" shape-rendering="crispEdges"><path fill="#000" d="M0 0h2v1h-2zM0 1h1v1h-1zM2 1h1v1h-1zM0 2h1v1h-1zM3 2h1v1h-1zM0 3h1v1h-1zM4 3h1v1h-1zM0 4h1v1h-1zM5 4h1v1h-1zM0 5h1v1h-1zM6 5h1v1h-1zM0 6h1v1h-1zM6 6h1v1h-1zM0 7h1v1h-1zM5 7h1v1h-1zM0 8h1v1h-1zM4 8h1v1h-1zM0 9h1v1h-1zM3 9h1v1h-1zM0 10h1v1h-1zM2 10h1v1h-1zM0 11h2v1h-2z"/><path fill="#404040" d="M1 1h1v1h-1zM1 2h2v1h-2zM1 3h3v1h-3zM1 4h4v1h-4zM1 5h5v1h-5zM1 6h5v1h-5zM1 7h4v1h-4zM1 8h3v1h-3zM1 9h2v1h-2zM1 10h1v1h-1z"/></svg>
<svg class="ic" style="left:391px;top:5px" width="11" height="12" viewBox="0 0 11 12" shape-rendering="crispEdges"><path fill="#000" d="M0 0h2v1h-2zM4 0h2v1h-2zM0 1h1v1h-1zM2 1h1v1h-1zM5 1h2v1h-2zM0 2h1v1h-1zM3 2h1v1h-1zM6 2h2v1h-2zM0 3h1v1h-1zM4 3h1v1h-1zM7 3h2v1h-2zM0 4h1v1h-1zM5 4h1v1h-1zM8 4h2v1h-2zM0 5h1v1h-1zM6 5h1v1h-1zM8 5h3v1h-3zM0 6h1v1h-1zM6 6h1v1h-1zM8 6h3v1h-3zM0 7h1v1h-1zM5 7h1v1h-1zM8 7h2v1h-2zM0 8h1v1h-1zM4 8h1v1h-1zM7 8h2v1h-2zM0 9h1v1h-1zM3 9h1v1h-1zM6 9h2v1h-2zM0 10h1v1h-1zM2 10h1v1h-1zM5 10h2v1h-2zM0 11h2v1h-2zM4 11h2v1h-2z"/><path fill="#404040" d="M1 1h1v1h-1zM1 2h2v1h-2zM1 3h3v1h-3zM1 4h4v1h-4zM1 5h5v1h-5zM1 6h5v1h-5zM1 7h4v1h-4zM1 8h3v1h-3zM1 9h2v1h-2zM1 10h1v1h-1z"/></svg>
<svg class="ic" style="left:416px;top:5px" width="11" height="12" viewBox="0 0 11 12" shape-rendering="crispEdges"><path fill="#000" d="M0 0h2v1h-2zM8 0h1v1h-1zM10 0h1v1h-1zM0 1h1v1h-1zM2 1h1v1h-1zM8 1h1v1h-1zM10 1h1v1h-1zM0 2h1v1h-1zM3 2h1v1h-1zM8 2h1v1h-1zM10 2h1v1h-1zM0 3h1v1h-1zM4 3h1v1h-1zM8 3h1v1h-1zM10 3h1v1h-1zM0 4h1v1h-1zM5 4h1v1h-1zM8 4h1v1h-1zM10 4h1v1h-1zM0 5h1v1h-1zM6 5h1v1h-1zM8 5h1v1h-1zM10 5h1v1h-1zM0 6h1v1h-1zM6 6h1v1h-1zM8 6h1v1h-1zM10 6h1v1h-1zM0 7h1v1h-1zM5 7h1v1h-1zM8 7h1v1h-1zM10 7h1v1h-1zM0 8h1v1h-1zM4 8h1v1h-1zM8 8h1v1h-1zM10 8h1v1h-1zM0 9h1v1h-1zM3 9h1v1h-1zM8 9h1v1h-1zM10 9h1v1h-1zM0 10h1v1h-1zM2 10h1v1h-1zM8 10h1v1h-1zM10 10h1v1h-1zM0 11h2v1h-2zM8 11h1v1h-1zM10 11h1v1h-1z"/><path fill="#404040" d="M9 0h1v1h-1zM1 1h1v1h-1zM9 1h1v1h-1zM1 2h2v1h-2zM9 2h1v1h-1zM1 3h3v1h-3zM9 3h1v1h-1zM1 4h4v1h-4zM9 4h1v1h-1zM1 5h5v1h-5zM9 5h1v1h-1zM1 6h5v1h-5zM9 6h1v1h-1zM1 7h4v1h-4zM9 7h1v1h-1zM1 8h3v1h-3zM9 8h1v1h-1zM1 9h2v1h-2zM9 9h1v1h-1zM1 10h1v1h-1zM9 10h1v1h-1zM9 11h1v1h-1z"/></svg>
<svg class="ic" style="left:449px;top:4px" width="14" height="14" viewBox="0 0 14 14" shape-rendering="crispEdges"><path fill="#202020" d="M5 0h4v1h-4zM5 1h1v1h-1zM8 1h1v1h-1zM5 2h1v1h-1zM8 2h1v1h-1zM5 3h1v1h-1zM8 3h1v1h-1zM5 4h1v1h-1zM8 4h1v1h-1zM0 5h5v1h-5zM8 5h6v1h-6zM0 6h1v1h-1zM13 6h1v1h-1zM0 7h1v1h-1zM13 7h1v1h-1zM0 8h6v1h-6zM8 8h6v1h-6zM5 9h1v1h-1zM8 9h1v1h-1zM5 10h1v1h-1zM8 10h1v1h-1zM5 11h1v1h-1zM8 11h1v1h-1zM5 12h1v1h-1zM8 12h1v1h-1zM5 13h4v1h-4z"/><path fill="#404040" d="M6 1h2v1h-2zM6 2h2v1h-2zM6 3h2v1h-2zM6 4h2v1h-2zM5 5h3v1h-3zM1 6h12v1h-12zM1 7h12v1h-12zM6 8h2v1h-2zM6 9h2v1h-2zM6 10h2v1h-2zM6 11h2v1h-2zM6 12h2v1h-2z"/></svg>
<svg class="ic" style="left:475px;top:5px" width="16" height="13" viewBox="0 0 16 13" shape-rendering="crispEdges"><path fill="#808080" d="M0 0h1v1h-1zM15 0h1v1h-1zM0 4h1v1h-1zM15 4h1v1h-1z"/><path fill="#000" d="M1 0h14v1h-14zM0 1h1v1h-1zM15 1h1v1h-1zM0 2h1v1h-1zM15 2h1v1h-1zM0 3h1v1h-1zM5 3h3v1h-3zM11 3h3v1h-3zM15 3h1v1h-1zM1 4h14v1h-14zM6 5h8v1h-8zM7 6h6v1h-6zM8 7h4v1h-4zM7 8h6v1h-6zM6 9h8v1h-8zM5 10h4v1h-4zM11 10h4v1h-4zM5 11h3v1h-3zM12 11h3v1h-3zM5 12h2v1h-2zM13 12h2v1h-2z"/><path fill="#fff" d="M1 1h14v1h-14zM1 2h14v1h-14zM1 3h4v1h-4zM8 3h3v1h-3zM14 3h1v1h-1z"/></svg>
<svg class="ic" style="left:501px;top:3px" width="18" height="18" viewBox="0 0 18 18" shape-rendering="crispEdges"><path fill="#c0c0c0" d="M2 0h2v1h-2zM2 1h1v1h-1zM4 1h1v1h-1zM0 2h5v1h-5zM0 3h1v1h-1zM2 3h1v1h-1zM4 3h1v1h-1zM0 4h7v1h-7zM2 5h1v1h-1zM4 5h1v1h-1zM6 5h1v1h-1zM3 6h5v1h-5zM4 7h1v1h-1zM6 7h1v1h-1zM5 8h1v1h-1zM10 8h1v1h-1zM8 9h1v1h-1zM10 9h1v1h-1zM8 10h1v1h-1zM10 10h1v1h-1zM12 10h1v1h-1zM8 11h1v1h-1zM10 11h1v1h-1zM12 11h1v1h-1zM10 12h1v1h-1zM12 12h1v1h-1zM10 13h1v1h-1z"/><path fill="#e0e0e0" d="M1 1h1v1h-1zM3 1h1v1h-1zM1 3h1v1h-1zM3 3h1v1h-1zM5 3h1v1h-1zM3 5h1v1h-1zM5 5h1v1h-1zM7 5h1v1h-1zM5 7h1v1h-1z"/><path fill="#000" d="M5 2h1v1h-1zM6 3h1v1h-1zM7 4h1v1h-1zM1 5h1v1h-1zM8 5h1v1h-1zM2 6h1v1h-1zM8 6h2v1h-2zM3 7h1v1h-1zM7 7h4v1h-4zM4 8h1v1h-1zM6 8h3v1h-3zM11 8h1v1h-1zM5 9h3v1h-3zM12 9h1v1h-1zM6 10h1v1h-1zM13 10h1v1h-1zM7 11h1v1h-1zM8 12h1v1h-1zM13 12h2v1h-2zM9 13h1v1h-1zM12 13h2v1h-2zM10 14h3v1h-3z"/><path fill="#808080" d="M9 4h1v1h-1zM11 4h1v1h-1zM13 4h1v1h-1zM15 4h1v1h-1zM9 8h1v1h-1zM9 9h1v1h-1zM11 9h1v1h-1zM7 10h1v1h-1zM9 10h1v1h-1zM11 10h1v1h-1zM9 11h1v1h-1zM11 11h1v1h-1zM13 11h1v1h-1zM5 12h1v1h-1zM9 12h1v1h-1zM11 12h1v1h-1zM11 13h1v1h-1zM5 14h1v1h-1zM5 16h1v1h-1z"/><path fill="#fff" d="M9 5h8v1h-8zM10 6h7v1h-7zM11 7h6v1h-6zM12 8h5v1h-5zM13 9h4v1h-4zM14 10h3v1h-3zM6 11h1v1h-1zM14 11h3v1h-3zM6 12h2v1h-2zM6 13h3v1h-3zM6 14h4v1h-4zM6 15h5v1h-5zM6 16h11v1h-11zM6 17h11v1h-11z"/><path fill="#404040" d="M15 12h2v1h-2zM14 13h3v1h-3zM13 14h4v1h-4zM11 15h6v1h-6z"/></svg>
<svg class="ic" style="left:536px;top:3px" width="10" height="16" viewBox="0 0 10 16" shape-rendering="crispEdges"><path fill="#000" d="M2 0h6v1h-6zM1 1h1v1h-1zM6 1h3v1h-3zM0 2h1v1h-1zM2 2h2v1h-2zM7 2h3v1h-3zM0 3h4v1h-4zM7 3h3v1h-3zM1 4h2v1h-2zM7 4h3v1h-3zM6 5h4v1h-4zM5 6h4v1h-4zM4 7h3v1h-3zM4 8h2v1h-2zM4 9h1v1h-1zM4 10h1v1h-1zM4 12h3v1h-3zM3 13h1v1h-1zM5 13h3v1h-3zM3 14h5v1h-5zM4 15h3v1h-3z"/><path fill="#fff" d="M1 2h1v1h-1zM4 13h1v1h-1z"/></svg>
<svg class="ic" style="left:570px;top:5px" width="16" height="14" viewBox="0 0 16 14" shape-rendering="crispEdges"><path fill="#000" d="M1 0h9v1h-9zM1 1h1v1h-1zM3 1h5v1h-5zM9 1h1v1h-1zM1 2h1v1h-1zM5 2h2v1h-2zM8 2h2v1h-2zM1 3h1v1h-1zM6 3h2v1h-2zM9 3h1v1h-1zM13 3h1v1h-1zM1 4h1v1h-1zM6 4h1v1h-1zM8 4h2v1h-2zM12 4h2v1h-2zM1 5h1v1h-1zM6 5h2v1h-2zM9 5h1v1h-1zM11 5h5v1h-5zM1 6h1v1h-1zM4 6h1v1h-1zM6 6h1v1h-1zM8 6h2v1h-2zM12 6h2v1h-2zM1 7h1v1h-1zM6 7h2v1h-2zM9 7h1v1h-1zM13 7h1v1h-1zM1 8h1v1h-1zM6 8h1v1h-1zM8 8h2v1h-2zM1 9h1v1h-1zM6 9h2v1h-2zM9 9h1v1h-1zM1 10h1v1h-1zM6 10h1v1h-1zM8 10h2v1h-2zM0 11h2v1h-2zM6 11h2v1h-2zM9 11h7v1h-7zM3 12h2v1h-2zM6 12h1v1h-1zM5 13h2v1h-2z"/><path fill="#c0c0c0" d="M2 1h1v1h-1zM3 2h1v1h-1zM2 3h1v1h-1zM4 3h1v1h-1zM3 4h1v1h-1zM5 4h1v1h-1zM2 5h1v1h-1zM4 5h1v1h-1zM3 6h1v1h-1zM5 6h1v1h-1zM2 7h1v1h-1zM4 7h1v1h-1zM3 8h1v1h-1zM5 8h1v1h-1zM2 9h1v1h-1zM4 9h1v1h-1zM3 10h1v1h-1zM5 10h1v1h-1zM2 11h1v1h-1zM4 11h1v1h-1zM5 12h1v1h-1z"/><path fill="#808080" d="M8 1h1v1h-1zM7 2h1v1h-1zM8 3h1v1h-1zM7 4h1v1h-1zM8 5h1v1h-1zM7 6h1v1h-1zM8 7h1v1h-1zM7 8h1v1h-1zM8 9h1v1h-1zM7 10h1v1h-1zM8 11h1v1h-1z"/><path fill="#fff" d="M2 2h1v1h-1zM4 2h1v1h-1zM3 3h1v1h-1zM5 3h1v1h-1zM2 4h1v1h-1zM4 4h1v1h-1zM3 5h1v1h-1zM5 5h1v1h-1zM2 6h1v1h-1zM3 7h1v1h-1zM5 7h1v1h-1zM2 8h1v1h-1zM4 8h1v1h-1zM3 9h1v1h-1zM5 9h1v1h-1zM2 10h1v1h-1zM4 10h1v1h-1zM3 11h1v1h-1zM5 11h1v1h-1z"/></svg>
<div class="sep" style="left:35px"></div>
<div class="sep" style="left:69px"></div>
<div class="sep" style="left:155px"></div>
<div class="sep" style="left:189px"></div>
<div class="sep" style="left:275px"></div>
<div class="sep" style="left:439px"></div>
<div class="sep" style="left:525px"></div>
<div class="sep" style="left:559px"></div>
  </div>
  <div id="mdi">
<svg style="left:348px;top:579px" width="560" height="16" viewBox="0 0 560 16" fill="#e0e0e0"><rect x="7.7" y="0" width="11.6" height="15.7"/><rect x="63.4" y="0" width="11.7" height="15.7"/><polygon points="30.2,0.0 53.0,0.0 47.9,15.7 35.4,15.7"/><rect x="84.7" y="0" width="13.3" height="15.7"/><path fill-rule="evenodd" d="M108.1 0H156.7C153.0 10 145.0 15.7 131.0 15.7H108.1ZM120.6 0H144.0C141.5 5 137.0 7.6 130.0 7.6H120.6Z"/><path fill-rule="evenodd" d="M167.1 0H215.7C212.0 10 204.0 15.7 190.0 15.7H167.1ZM179.6 0H203.0C200.5 5 196.0 7.6 189.0 7.6H179.6Z"/><polygon points="225.9,0.0 237.7,0.0 237.7,8.0 264.2,8.0 264.2,15.7 225.9,15.7"/><polygon points="270.1,0.0 282.6,0.0 282.6,8.0 310.6,8.0 310.6,15.7 270.1,15.7"/><polygon points="326.1,0.0 349.7,0.0 345.2,15.7 329.8,15.7"/><polygon points="362.4,0.0 386.1,0.0 383.0,15.7 366.5,15.7"/><polygon points="398.5,0.0 412.0,0.0 406.7,15.7 393.3,15.7"/><rect x="409" y="0.8" width="27" height="4.5"/><polygon points="432.5,0.0 445.3,0.0 451.0,15.7 437.7,15.7"/><rect x="456.2" y="0" width="13.0" height="15.7"/><polygon points="488.6,0.0 501.6,0.0 503.7,15.7 491.3,15.7"/><polygon points="510.9,0.0 524.3,0.0 524.3,7.8 551.1,7.8 551.1,15.7 510.9,15.7"/></svg>
    <div id="child">
      <div id="ctitle"><div id="ctext">Multi-Lingual Messages Screen</div></div>
      <div id="info"></div>
      <div id="chl"></div><div id="chd"></div><div id="cbl"></div><div id="cbd"></div>
      <div id="form">
<div class="lbl" style="left:14px;top:123px;letter-spacing:-0.18px">Company:&nbsp; JP1</div>
<div class="lbl" style="left:119px;top:123px;letter-spacing:-0.24px">Department:&nbsp; 0000</div>
<div class="lbl" style="left:730px;top:123px;letter-spacing:-0.32px">07-NOV-2025</div>
<div class="lbl" style="left:889px;top:123px;letter-spacing:-0.28px">MLS0040&nbsp; v4.3</div>
<div class="grp" style="left:17px;top:153px;width:953px;height:107px"><i></i></div>
<div class="gt" style="left:30px;top:147px;letter-spacing:-0.18px">Primary Selection Criteria</div>
<div class="lbl" style="left:53px;top:185px;letter-spacing:-0.18px">Message ID</div>
<div class="lbl" style="left:139px;top:185px;letter-spacing:-0.40px">Language</div>
<div class="lbl" style="left:219px;top:185px;letter-spacing:-0.07px">Message Text</div>
<div class="fld " style="left:51px;top:200px;width:73px;height:23px;letter-spacing:-0.18px;">%</div>
<div class="fld " style="left:137px;top:200px;width:67px;height:23px;letter-spacing:-0.18px;">ENG</div>
<div class="fld " style="left:217px;top:200px;width:680px;height:23px;letter-spacing:-0.18px;">%</div>
<div class="grp" style="left:17px;top:277px;width:953px;height:164px"><i></i></div>
<div class="gt" style="left:30px;top:271px;letter-spacing:-0.18px">Secondary Selection Criteria</div>
<div class="lbl" style="left:53px;top:305px;letter-spacing:-0.18px">Message ID</div>
<div class="lbl" style="left:139px;top:305px;letter-spacing:-0.40px">Language</div>
<div class="lbl" style="left:219px;top:305px;letter-spacing:-0.07px">Message Text</div>
<div class="fld sel" style="left:51px;top:320px;width:73px;height:23px;letter-spacing:-0.38px;"><b style="width:43px"></b><span>000001</span></div>
<div class="fld sel" style="left:137px;top:320px;width:67px;height:23px;letter-spacing:-0.18px;">ENG</div>
<div class="fld sel" style="left:217px;top:320px;width:680px;height:23px;letter-spacing:-0.18px;">^ does not exist</div>
<div class="fld " style="left:51px;top:343px;width:73px;height:24px;padding-top:2px;letter-spacing:-0.38px;">000002</div>
<div class="fld " style="left:137px;top:343px;width:67px;height:24px;padding-top:2px;letter-spacing:-0.18px;">ENG</div>
<div class="fld " style="left:217px;top:343px;width:680px;height:24px;padding-top:2px;letter-spacing:-0.18px;">^ already exists</div>
<div class="fld " style="left:51px;top:367px;width:73px;height:23px;letter-spacing:-0.38px;">000003</div>
<div class="fld " style="left:137px;top:367px;width:67px;height:23px;letter-spacing:-0.18px;">ENG</div>
<div class="fld " style="left:217px;top:367px;width:680px;height:23px;letter-spacing:-0.33px;">^ is invalid here</div>
<div class="fld " style="left:51px;top:390px;width:73px;height:23px;letter-spacing:-0.38px;">000004</div>
<div class="fld " style="left:137px;top:390px;width:67px;height:23px;letter-spacing:-0.18px;">ENG</div>
<div class="fld " style="left:217px;top:390px;width:680px;height:23px;letter-spacing:-0.27px;">Please enter a value</div>
<div class="grp" style="left:17px;top:458px;width:953px;height:188px"><i></i></div>
<div class="gt" style="left:30px;top:452px;letter-spacing:-0.29px">Other Languages</div>
<div class="lbl" style="left:53px;top:485px;letter-spacing:-0.18px">Message ID</div>
<div class="lbl" style="left:139px;top:485px;letter-spacing:-0.40px">Language</div>
<div class="lbl" style="left:219px;top:485px;letter-spacing:-0.07px">Message Text</div>
<div class="fld dis" style="left:51px;top:500px;width:73px;height:23px;letter-spacing:-0.38px;">000001</div>
<div class="fld " style="left:137px;top:500px;width:67px;height:23px;letter-spacing:-0.18px;">FRA</div>
<div class="fld " style="left:217px;top:500px;width:680px;height:23px;letter-spacing:-0.11px;">Un message en Francais.</div>
<div class="fld dis" style="left:51px;top:523px;width:73px;height:24px;padding-top:2px;letter-spacing:-0.38px;"></div>
<div class="fld " style="left:137px;top:523px;width:67px;height:24px;padding-top:2px;letter-spacing:-0.18px;"></div>
<div class="fld " style="left:217px;top:523px;width:680px;height:24px;padding-top:2px;letter-spacing:-0.11px;"></div>
<div class="fld dis" style="left:51px;top:547px;width:73px;height:23px;letter-spacing:-0.38px;"></div>
<div class="fld " style="left:137px;top:547px;width:67px;height:23px;letter-spacing:-0.18px;"></div>
<div class="fld " style="left:217px;top:547px;width:680px;height:23px;letter-spacing:-0.11px;"></div>
<div class="fld dis" style="left:51px;top:570px;width:73px;height:23px;letter-spacing:-0.38px;"></div>
<div class="fld " style="left:137px;top:570px;width:67px;height:23px;letter-spacing:-0.18px;"></div>
<div class="fld " style="left:217px;top:570px;width:680px;height:23px;letter-spacing:-0.11px;"></div>
<div class="fld dis" style="left:51px;top:593px;width:73px;height:24px;padding-top:2px;letter-spacing:-0.38px;"></div>
<div class="fld " style="left:137px;top:593px;width:67px;height:24px;padding-top:2px;letter-spacing:-0.18px;"></div>
<div class="fld " style="left:217px;top:593px;width:680px;height:24px;padding-top:2px;letter-spacing:-0.11px;"></div>
<div class="sb" style="left:904px;top:320px;height:93px"><div class="sbk" style="top:16px;height:61px"></div><div class="sbb" style="top:0"></div><svg class="ic" style="left:6px;top:6px" width="7" height="4" viewBox="0 0 7 4" shape-rendering="crispEdges"><path fill="#000" d="M3 0h1v1h-1zM2 1h3v1h-3zM1 2h5v1h-5zM0 3h7v1h-7z"/></svg><div class="sbt" style="top:16px;height:30px"></div><div class="sbb" style="top:77px"></div><svg class="ic" style="left:6px;top:83px" width="7" height="4" viewBox="0 0 7 4" shape-rendering="crispEdges"><path fill="#000" d="M0 0h7v1h-7zM1 1h5v1h-5zM2 2h3v1h-3zM3 3h1v1h-1z"/></svg></div>
<div class="sb" style="left:904px;top:500px;height:113px"><div class="sbk" style="top:16px;height:81px"></div><div class="sbb" style="top:0"></div><svg class="ic" style="left:6px;top:6px" width="7" height="4" viewBox="0 0 7 4" shape-rendering="crispEdges"><path fill="#000" d="M3 0h1v1h-1zM2 1h3v1h-3zM1 2h5v1h-5zM0 3h7v1h-7z"/></svg><div class="sbt" style="top:16px;height:81px"></div><div class="sbb" style="top:97px"></div><svg class="ic" style="left:6px;top:103px" width="7" height="4" viewBox="0 0 7 4" shape-rendering="crispEdges"><path fill="#000" d="M0 0h7v1h-7zM1 1h5v1h-5zM2 2h3v1h-3zM3 3h1v1h-1z"/></svg></div>
<svg class="ic" style="left:6px;top:92px" width="16" height="16" viewBox="0 0 16 16" shape-rendering="crispEdges"><path fill="#b8b0e8" d="M3 0h1v1h-1zM9 0h1v1h-1zM1 1h2v1h-2zM4 1h3v1h-3zM1 2h1v1h-1zM4 2h1v1h-1z"/><path fill="#0000d0" d="M5 0h4v1h-4zM7 1h3v1h-3zM11 6h3v1h-3zM11 7h3v1h-3zM12 12h3v1h-3zM12 13h3v1h-3zM12 14h2v1h-2z"/><path fill="#66c088" d="M3 1h1v1h-1zM2 2h2v1h-2zM1 3h3v1h-3zM1 4h2v1h-2zM1 5h2v1h-2zM1 6h2v1h-2zM1 7h2v1h-2z"/><path fill="#fff" d="M10 1h1v1h-1zM4 5h11v1h-11zM4 6h1v1h-1zM6 6h2v1h-2zM10 6h1v1h-1zM14 6h1v1h-1zM4 7h3v1h-3zM10 7h1v1h-1zM14 7h1v1h-1zM4 8h2v1h-2zM10 8h5v1h-5zM4 9h1v1h-1zM9 9h1v1h-1zM14 9h1v1h-1zM9 10h6v1h-6zM13 11h2v1h-2zM9 12h3v1h-3zM8 13h1v1h-1zM7 14h5v1h-5zM14 14h1v1h-1z"/><path fill="#000080" d="M5 2h6v1h-6zM4 3h8v1h-8zM8 6h2v1h-2zM7 7h1v1h-1zM9 7h1v1h-1zM1 8h2v1h-2zM6 8h1v1h-1zM9 8h1v1h-1zM1 9h2v1h-2zM5 9h1v1h-1zM8 9h1v1h-1zM2 10h1v1h-1zM4 10h1v1h-1zM8 10h1v1h-1zM9 11h1v1h-1zM4 12h2v1h-2zM8 12h1v1h-1zM4 13h1v1h-1zM7 13h1v1h-1zM4 14h1v1h-1zM6 14h1v1h-1z"/><path fill="#000" d="M0 3h1v1h-1zM0 4h1v1h-1zM3 4h13v1h-13zM0 5h1v1h-1zM3 5h1v1h-1zM15 5h1v1h-1zM0 6h1v1h-1zM3 6h1v1h-1zM15 6h1v1h-1zM0 7h1v1h-1zM3 7h1v1h-1zM15 7h1v1h-1zM3 8h1v1h-1zM15 8h1v1h-1zM3 9h1v1h-1zM15 9h1v1h-1zM3 10h1v1h-1zM15 10h1v1h-1zM3 11h1v1h-1zM15 11h1v1h-1zM3 12h1v1h-1zM15 12h1v1h-1zM3 13h1v1h-1zM15 13h1v1h-1zM3 14h1v1h-1zM15 14h1v1h-1zM3 15h13v1h-13z"/><path fill="#e0e0e0" d="M5 6h1v1h-1z"/><path fill="#ffff00" d="M8 7h1v1h-1zM7 8h2v1h-2zM6 9h2v1h-2zM5 10h3v1h-3zM4 11h5v1h-5zM6 12h2v1h-2zM5 13h2v1h-2zM5 14h1v1h-1z"/><path fill="#ff0000" d="M10 9h4v1h-4zM10 11h3v1h-3zM9 13h3v1h-3z"/></svg>
<div class="cb" style="left:950px"></div><div style="left:954px;top:104px;width:6px;height:2px;background:#000"></div>
<div class="cb" style="left:968px"></div><svg class="ic" style="left:972px;top:98px" width="8" height="7" viewBox="0 0 8 7" shape-rendering="crispEdges"><path fill="#000" d="M0 0h2v1h-2zM6 0h2v1h-2zM1 1h2v1h-2zM5 1h2v1h-2zM2 2h4v1h-4zM3 3h2v1h-2zM2 4h4v1h-4zM1 5h2v1h-2zM5 5h2v1h-2zM0 6h2v1h-2zM6 6h2v1h-2z"/></svg>
      </div>
    </div>
  </div>
  <div id="msgline"></div><div id="vr1"></div><div id="vr2"></div><div id="lb"></div>
  <div id="status">
    <div class="st" style="left:2.700px">Record: 1/?</div>
    <div class="sd" style="left:124px"></div>
    <div class="sd" style="left:142px"></div>
    <div class="st" style="left:199px">...</div>
    <div class="sd" style="left:212px"></div>
    <div class="sd" style="left:291px"></div>
    <div class="sd" style="left:336px"></div>
    <div class="st" style="left:339px">&lt;OSC&gt;</div>
    <div class="sd" style="left:877px"></div>
  </div>
  <div id="frame"></div>
  <div style="left:5px;top:0;width:13px;height:1px;background:#2a78c6"></div><div style="left:18px;top:0;width:5px;height:1px;background:#5aa6b8"></div>
</div>
</body>
</html>
